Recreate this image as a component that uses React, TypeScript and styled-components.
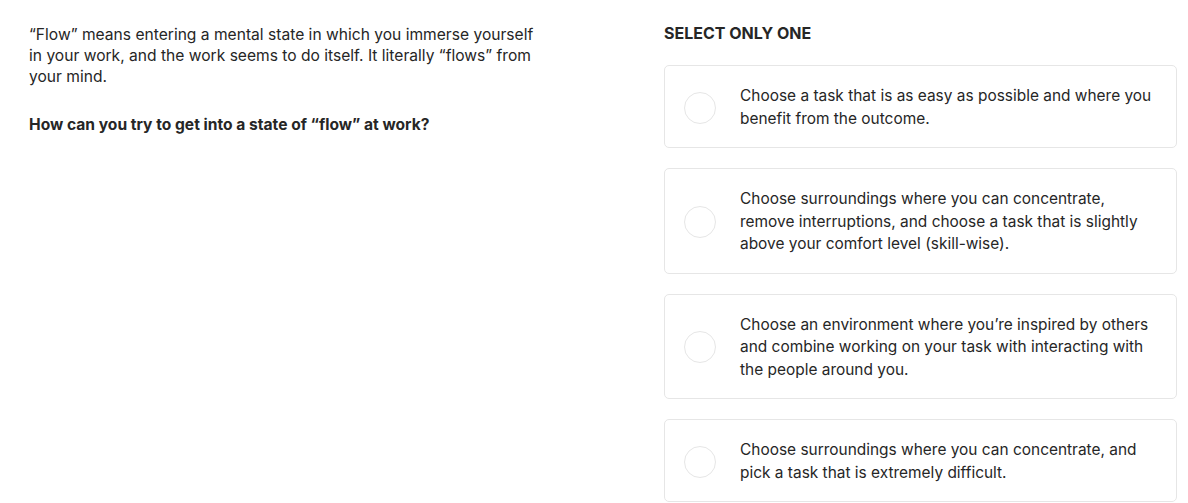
import React from "react";
import styled, { createGlobalStyle } from "styled-components";

const Global = createGlobalStyle`
  html, body { margin: 0; padding: 0; background: #ffffff; }
  body { font-family: Inter, "Noto Sans", "Liberation Sans", sans-serif; color: #262626; }
  * { box-sizing: border-box; }
`;

const Page = styled.div`
  display: flex;
  align-items: flex-start;
  padding: 23px 10px 0 29px;
  width: 1188px;
`;

const Intro = styled.div`
  width: 635px;
  flex-shrink: 0;
  padding-top: 1px;
`;

const Paragraph = styled.p<{ $bold?: boolean }>`
  margin: 0 0 27px;
  max-width: 514px;
  font-size: 15.6px;
  line-height: 21px;
  font-weight: ${(p) => (p.$bold ? 700 : 400)};
`;

const Choices = styled.div`
  width: 513px;
  display: flex;
  flex-direction: column;
`;

const Label = styled.div`
  font-size: 16px;
  line-height: 21px;
  font-weight: 700;
  text-transform: uppercase;
  margin-bottom: 21px;
`;

const List = styled.div`
  display: flex;
  flex-direction: column;
  gap: 20px;
`;

const Option = styled.label`
  display: flex;
  align-items: center;
  gap: 24px;
  padding: 19px 22px 17px 19px;
  border: 1px solid #e6e6e6;
  border-radius: 5px;
  background: #fff;
  cursor: pointer;
`;

const Radio = styled.span`
  flex-shrink: 0;
  width: 32px;
  height: 32px;
  border-radius: 50%;
  border: 1px solid #e6e6e6;
`;

const OptionText = styled.span`
  font-size: 15.45px;
  line-height: 22.5px;
`;

const options = [
  "Choose a task that is as easy as possible and where you benefit from the outcome.",
  "Choose surroundings where you can concentrate, remove interruptions, and choose a task that is slightly above your comfort level (skill-wise).",
  "Choose an environment where you\u2019re inspired by others and combine working on your task with interacting with the people around you.",
  "Choose surroundings where you can concentrate, and pick a task that is extremely difficult.",
];

export default function App() {
  return (
    <>
      <Global />
      <Page>
        <Intro>
          <Paragraph>
            {"\u201cFlow\u201d means entering a mental state in which you immerse yourself in your work, and the work seems to do itself. It literally \u201cflows\u201d from your mind."}
          </Paragraph>
          <Paragraph $bold>
            {"How can you try to get into a state of \u201cflow\u201d at work?"}
          </Paragraph>
        </Intro>
        <Choices>
          <Label>Select only one</Label>
          <List>
            {options.map((o) => (
              <Option key={o}>
                <Radio />
                <OptionText>{o}</OptionText>
              </Option>
            ))}
          </List>
        </Choices>
      </Page>
    </>
  );
}
